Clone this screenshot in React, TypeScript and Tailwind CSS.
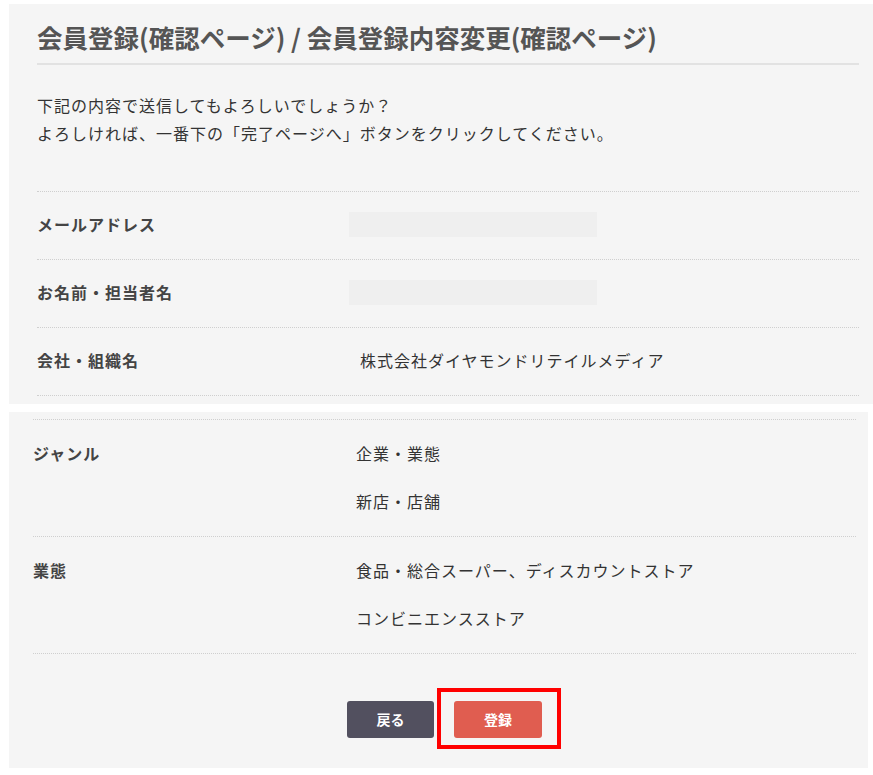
import React from "react";

const font = { fontFamily: '"Noto Sans CJK JP", "Noto Sans", sans-serif' };

function Row({
  label,
  children,
}: {
  label: string;
  children: React.ReactNode;
}) {
  return (
    <div className="flex h-[68px] items-center border-b border-dotted border-[#cfcfcf] pb-[3px]">
      <div className="w-[312px] text-[16px] font-bold tracking-[1px] text-[#444]">{label}</div>
      <div className="flex-1">{children}</div>
    </div>
  );
}

function MultiRow({ label, values }: { label: string; values: string[] }) {
  return (
    <div className="flex border-b border-dotted border-[#cfcfcf] pt-[19px] pb-[21px]">
      <div className="w-[312px] text-[16px] leading-[28px] font-bold tracking-[1px] text-[#444]">
        {label}
      </div>
      <div className="flex flex-1 flex-col gap-[20px] pl-[11px]">
        {values.map((v) => (
          <div key={v} className="text-[16px] leading-[28px] tracking-[1px] text-[#333]">
            {v}
          </div>
        ))}
      </div>
    </div>
  );
}

export default function App() {
  return (
    <div className="h-[775px] w-[873px] overflow-hidden bg-white pt-[4px]" style={font}>
      {/* Top panel */}
      <div className="ml-[9px] h-[400px] bg-[#f5f5f5] pt-[15px] pr-[14px] pl-[28px]">
        <h1 className="text-[25.5px] leading-[36px] font-bold text-[#555]">
          会員登録(確認ページ) / 会員登録内容変更(確認ページ)
        </h1>
        <div className="mt-[8px] h-[2px] bg-[#e2e2e2]" />
        <div className="mt-[26px] text-[16px] leading-[28px] tracking-[1px] text-[#333]">
          <p>下記の内容で送信してもよろしいでしょうか？</p>
          <p>よろしければ、一番下の「完了ページへ」ボタンをクリックしてください。</p>
        </div>
        <div className="mt-[44px] border-t border-dotted border-[#cfcfcf]">
          <Row label="メールアドレス">
            <div className="h-[25px] w-[248px] bg-[#efefef]" />
          </Row>
          <Row label="お名前・担当者名">
            <div className="h-[25px] w-[248px] bg-[#efefef]" />
          </Row>
          <Row label="会社・組織名">
            <div className="pl-[11px] text-[16px] tracking-[1px] text-[#333]">
              株式会社ダイヤモンドリテイルメディア
            </div>
          </Row>
        </div>
      </div>

      {/* Bottom panel */}
      <div className="mt-[8px] ml-[9px] h-[356px] w-[859px] bg-[#f5f5f5] pt-[7px] pr-[12px] pl-[24px]">
        <div className="border-t border-dotted border-[#cfcfcf]">
          <MultiRow label="ジャンル" values={["企業・業態", "新店・店舗"]} />
          <MultiRow
            label="業態"
            values={["食品・総合スーパー、ディスカウントストア", "コンビニエンスストア"]}
          />
        </div>
        <div className="mt-[47px] flex justify-center gap-[20px]">
          <button className="h-[37px] w-[87px] rounded-[3px] bg-[#52505f] text-[14px] font-bold text-white">
            戻る
          </button>
          <div className="relative">
            <button className="h-[37px] w-[88px] rounded-[3px] bg-[#e05d50] text-[14px] font-bold text-white">
              登録
            </button>
            <span className="pointer-events-none absolute -top-[13px] -right-[19px] -bottom-[11px] -left-[17px] border-[4px] border-[#ff0000]" />
          </div>
        </div>
      </div>
    </div>
  );
}
